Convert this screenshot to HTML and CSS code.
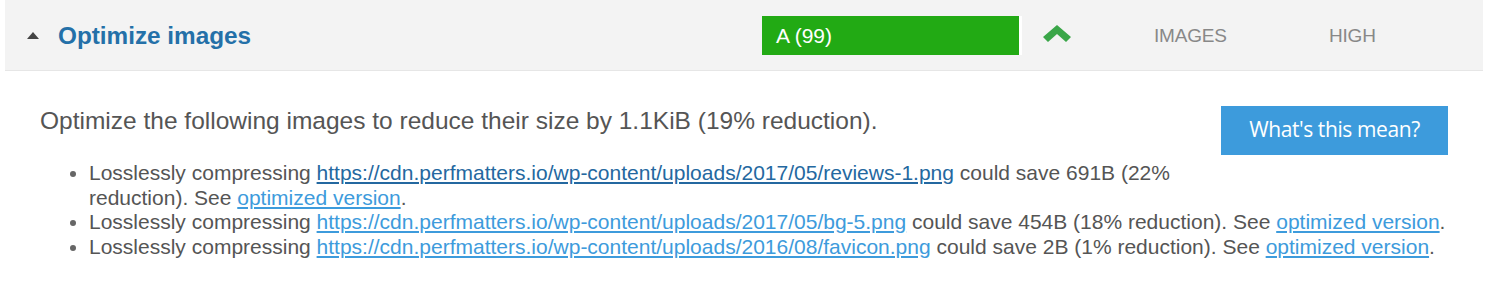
FILE: index.html
```html
<!DOCTYPE html>
<html>
<head>
<meta charset="utf-8">
<link rel="stylesheet" href="styles.css">
</head>
<body>
<div class="rule">
  <div class="rule-head">
    <div class="title-cell">
      <span class="caret"></span>
      <span class="title">Optimize images</span>
    </div>
    <div class="grade">A (99)</div>
    <div class="trend">
      <svg width="30" height="20" viewBox="0 0 30 20"><path d="M1 13 L15 1 L29 13 L24 18 L15 10 L6 18 Z" fill="#3aa648"/></svg>
    </div>
    <div class="type">IMAGES</div>
    <div class="priority">HIGH</div>
  </div>
  <div class="rule-body">
    <a class="btn" href="#">What's this mean?</a>
    <p class="summary">Optimize the following images to reduce their size by 1.1KiB (19% reduction).</p>
    <ul class="items">
      <li>Losslessly compressing <a class="visited" href="#">https://cdn.perfmatters.io/wp-content/uploads/2017/05/reviews-1.png</a> could save 691B (22% reduction). See <a href="#">optimized version</a>.</li>
      <li>Losslessly compressing <a href="#">https://cdn.perfmatters.io/wp-content/uploads/2017/05/bg-5.png</a> could save 454B (18% reduction). See <a href="#">optimized version</a>.</li>
      <li>Losslessly compressing <a href="#">https://cdn.perfmatters.io/wp-content/uploads/2016/08/favicon.png</a> could save 2B (1% reduction). See <a href="#">optimized version</a>.</li>
    </ul>
  </div>
</div>
</body>
</html>
```
FILE: styles.css
```css
html, body {
  margin: 0;
  padding: 0;
  background: #ffffff;
}
body {
  font-family: "Liberation Sans", Arial, sans-serif;
  color: #555555;
}
.rule {
  margin: 0 6px 0 5px;
}
.rule-head {
  display: flex;
  align-items: center;
  height: 71px;
  background: #f3f3f3;
  border-bottom: 1px solid #e6e6e6;
  box-sizing: border-box;
}
.title-cell {
  display: flex;
  align-items: center;
  width: 757px;
  padding-left: 22px;
  box-sizing: border-box;
}
.caret {
  width: 0;
  height: 0;
  border-left: 6px solid transparent;
  border-right: 6px solid transparent;
  border-bottom: 7px solid #444444;
  margin-right: 19px;
}
.title {
  font-size: 24.3px;
  font-weight: bold;
  color: #2470a8;
  margin-top: 1px;
}
.grade {
  height: 39px;
  line-height: 39px;
  background: #22aa14;
  color: #ffffff;
  font-size: 21px;
  padding-left: 14px;
  border-right: 3px solid #ffffff;
  box-sizing: content-box;
  width: 243px;
}
.trend {
  width: 132px;
  padding-left: 20px;
  box-sizing: border-box;
  display: flex;
  align-items: center;
  margin-top: -2px;
}
.type {
  width: 175px;
  font-size: 19px;
  color: #888888;
  letter-spacing: -0.2px;
  margin-top: 1px;
}
.priority {
  font-size: 19px;
  color: #888888;
  letter-spacing: -0.2px;
  margin-top: 1px;
}
.rule-body {
  padding: 35px 35px 0 35px;
}
.btn {
  float: right;
  width: 227px;
  height: 49px;
  line-height: 47px;
  background: #3d9bdc;
  color: #ffffff;
  text-align: center;
  text-decoration: none;
  font-family: "Open Sans", sans-serif;
  font-size: 21px;
  letter-spacing: -0.4px;
  margin: 0 0 30px 20px;
}
.summary {
  margin: 0;
  font-size: 24.5px;
  line-height: 30px;
  color: #555555;
}
.items {
  margin: 25px -8px 0 0;
  padding-left: 49px;
  font-size: 21px;
  line-height: 24.6px;
  color: #555555;
}
.items li::marker {
  color: #666666;
}
.items a {
  color: #3d9bdc;
  text-decoration: underline;
}
.items a.visited {
  color: #2468a0;
}
```
